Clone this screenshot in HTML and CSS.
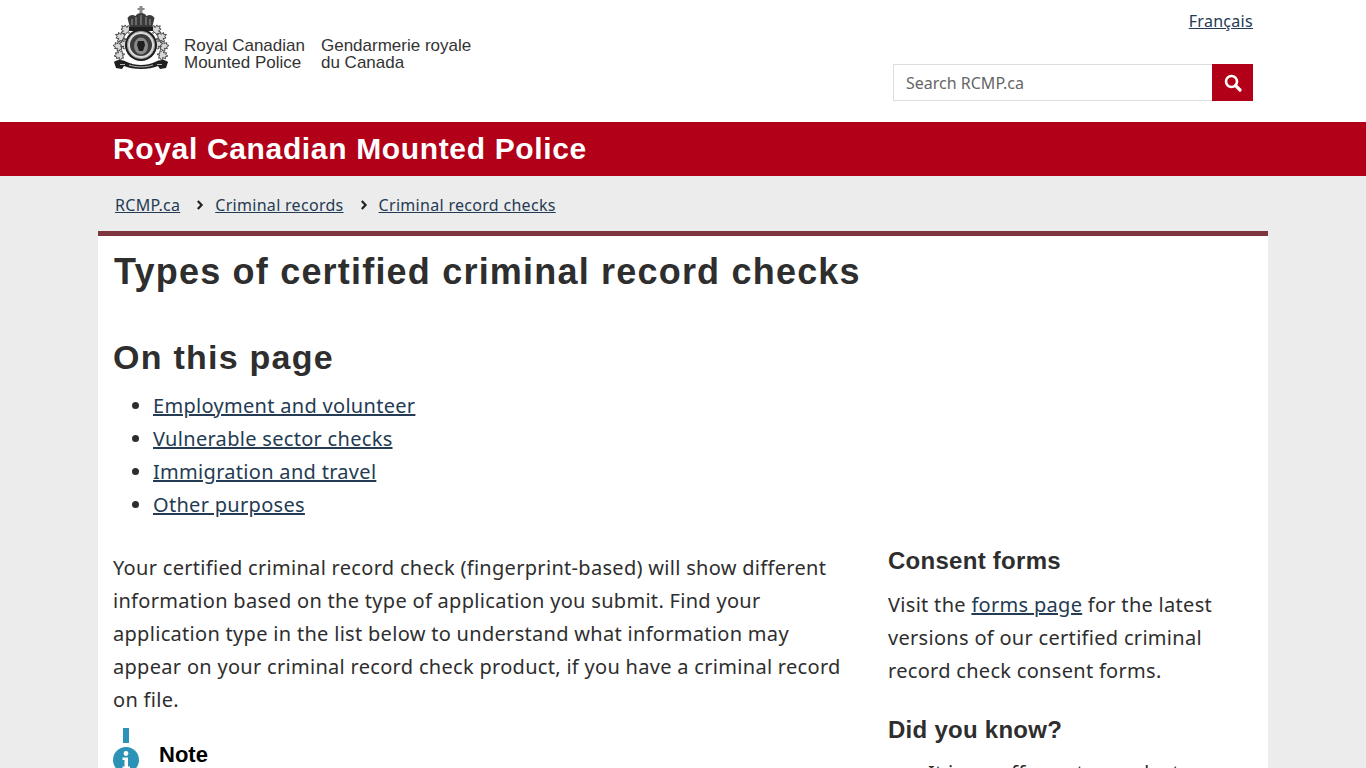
FILE: index.html
```html
<!DOCTYPE html>
<html lang="en">
<head>
<meta charset="utf-8">
<title>Types of certified criminal record checks</title>
<link rel="stylesheet" href="styles.css">
</head>
<body>
<header class="site-header">
  <div class="header-inner">
    <a class="brand" href="#">
      <svg class="crest" viewBox="0 0 56 66" width="56" height="66" aria-hidden="true">
        <defs>
          <path id="leaf" d="M0-6 1.300-3.500 3-4.200 2.400-1 4.500-1.800 5-.2 3.300 1.500 3.800 2.800 0.500 2.500 0.500 4.500-0.500 4.500-0.500 2.500-3.800 2.800-3.300 1.500-5-.2-4.500-1.800-2.400-1-3-4.200-1.300-3.500z"/>
        </defs>
        <g class="leaves">
          <use href="#leaf" transform="translate(7 50) rotate(-100)"/>
          <use href="#leaf" transform="translate(6 41) rotate(-85)"/>
          <use href="#leaf" transform="translate(8 32) rotate(-65)"/>
          <use href="#leaf" transform="translate(13 25) rotate(-45)"/>
          <use href="#leaf" transform="translate(12 39) rotate(-85)"/>
          <use href="#leaf" transform="translate(49 50) rotate(100)"/>
          <use href="#leaf" transform="translate(50 41) rotate(85)"/>
          <use href="#leaf" transform="translate(48 32) rotate(65)"/>
          <use href="#leaf" transform="translate(43 25) rotate(45)"/>
          <use href="#leaf" transform="translate(44 39) rotate(85)"/>
        </g>
        <path class="c-grey" d="M26.500 1h3v2h2v2h-2v3h-3V5h-2V3h2z"/>
        <path class="c-crown" d="M17 23 14.500 13c2-3 5-4 8-2 1-2 3-3 5.500-3s4.500 1 5.500 3c3-2 6-1 8 2L39 23z"/>
        <path class="c-lace" d="M19 14v6M23 12v8M28 10v10M33 12v8M37 14v6"/>
        <rect class="c-dark" x="16" y="22" width="24" height="4"/>
        <circle class="c-dark" cx="28" cy="40" r="16"/>
        <circle class="c-lace" cx="28" cy="40" r="13.600"/>
        <circle class="c-mid" cx="28" cy="40" r="11"/>
        <ellipse class="c-grey" cx="28" cy="41" rx="7" ry="8.500"/>
        <path class="c-dark" d="M25 36h6l1 4-2 6h-4l-2-6z"/>
        <path class="c-dark" d="M1 57c4-3 9-2 13 0 8 4 20 4 28 0 4-2 9-3 13 0l-2 6-6 1-2-3c-9 4-25 4-34 0l-2 3-6-1z"/>
        <path class="c-stripe" d="M7 59.500h5M16 60c7 2.500 17 2.500 24 0M44 59.500h5"/>
      </svg>
      <span class="wordmark"><span>Royal Canadian<br>Mounted Police</span><span>Gendarmerie royale<br>du Canada</span></span>
    </a>
    <div class="tools">
      <a class="lang" href="#">Français</a>
      <form class="search">
        <input class="search-input" type="text" placeholder="Search RCMP.ca" aria-label="Search RCMP.ca">
        <button class="search-btn" type="button" aria-label="Search">
          <svg viewBox="0 0 18 18" width="18" height="18" aria-hidden="true"><circle cx="7.500" cy="7.500" r="5.500" fill="none" stroke="#fff" stroke-width="2.600"/><path d="M11.600 11.600 16 16" stroke="#fff" stroke-width="3.200" stroke-linecap="round"/></svg>
        </button>
      </form>
    </div>
  </div>
</header>
<div class="banner"><div class="banner-inner">Royal Canadian Mounted Police</div></div>
<nav class="crumbs">
  <a href="#">RCMP.ca</a>
  <svg class="chev" viewBox="0 0 8 10" width="8" height="10" aria-hidden="true"><path d="M1.800 1 5.600 5 1.800 9" fill="none" stroke="#222" stroke-width="2.200"/></svg>
  <a href="#">Criminal records</a>
  <svg class="chev" viewBox="0 0 8 10" width="8" height="10" aria-hidden="true"><path d="M1.800 1 5.600 5 1.800 9" fill="none" stroke="#222" stroke-width="2.200"/></svg>
  <a href="#">Criminal record checks</a>
</nav>
<main class="page">
  <h1>Types of certified criminal record checks</h1>
  <h2>On this page</h2>
  <ul class="toc">
    <li><a href="#">Employment and volunteer</a></li>
    <li><a href="#">Vulnerable sector checks</a></li>
    <li><a href="#">Immigration and travel</a></li>
    <li><a href="#">Other purposes</a></li>
  </ul>
  <div class="columns">
    <div class="main-col">
      <p>Your certified criminal record check (fingerprint-based) will show different information based on the type of application you submit. Find your application type in the list below to understand what information may appear on your criminal record check product, if you have a criminal record on file.</p>
      <section class="note">
        <div class="note-icon">
          <span class="note-bar"></span>
          <svg viewBox="0 0 26 26" width="26" height="26" aria-hidden="true"><circle cx="13" cy="13" r="13" fill="#2b93b5"/><circle cx="13" cy="6.500" r="2.400" fill="#fff"/><path d="M9.500 10.500h5.500v9h2v2.500H9.500v-2.500h2v-6.500h-2z" fill="#fff"/></svg>
        </div>
        <h3>Note</h3>
      </section>
    </div>
    <aside class="side-col">
      <h3>Consent forms</h3>
      <p>Visit the <a href="#">forms page</a> for the latest versions of our certified criminal record check consent forms.</p>
      <h3 class="second">Did you know?</h3>
      <ul class="side-list"><li>It is an offence to conduct</li></ul>
    </aside>
  </div>
</main>
</body>
</html>
```
FILE: styles.css
```css
* { box-sizing: border-box; }
html, body { margin: 0; padding: 0; height: 768px; overflow: hidden; }
body { background: #ececec; color: #2e2e2e; font-family: "Noto Sans", sans-serif; font-size: 20px; line-height: 33px; letter-spacing: 0.3px; }
a { color: #243b53; text-decoration: underline; }
.site-header { background: #fff; height: 122px; }
.header-inner { width: 1140px; margin: 0 auto; padding-top: 5px; display: flex; justify-content: space-between; }
.brand { display: flex; align-items: flex-start; gap: 15px; text-decoration: none; color: #2e2e2e; }
.crest { flex: none; }
.leaves { fill: #d8d8d8; stroke: #333; stroke-width: 0.8px; }
.c-dark { fill: #1f1f1f; }
.c-grey { fill: #8a8a8a; }
.c-crown { fill: #3a3a3a; }
.c-lace { fill: #d9d9d9; stroke: #9a9a9a; stroke-width: 1px; }
.c-mid { fill: #3c3c3c; }
.c-stripe { fill: none; stroke: #b5b5b5; stroke-width: 1px; }
.wordmark { display: flex; gap: 16px; margin-top: 32px; font-family: "Liberation Sans", Arial, sans-serif; font-size: 17px; line-height: 17px; letter-spacing: 0; color: #333; }
.tools { display: flex; flex-direction: column; align-items: flex-end; padding-top: 1px; }
.lang { font-size: 16px; line-height: 30px; color: #243b53; }
.search { display: flex; width: 360px; height: 37px; margin-top: 28px; }
.search-input { flex: 1; min-width: 0; border: 1px solid #ddd; border-right: 0; padding: 0 12px; font: 16px "Noto Sans", sans-serif; color: #555; background: #fff; outline: 0; }
.search-input::placeholder { color: #666; opacity: 1; }
.search-btn { width: 41px; border: 0; padding: 0; background: #b10018; display: flex; align-items: center; justify-content: center; }
.banner { background: #b10018; height: 54px; }
.banner-inner { width: 1140px; margin: 0 auto; color: #fff; font-family: "Liberation Sans", Arial, sans-serif; font-weight: 700; font-size: 30px; line-height: 53px; letter-spacing: 0.65px; }
.crumbs { width: 1136px; margin: 0 auto; height: 55px; display: flex; align-items: center; gap: 12px; font-size: 16px; line-height: 22px; padding-top: 3px; }
.chev { flex: none; margin-left: 4px; margin-right: -1px; }
.page { width: 1170px; margin: 0 auto; background: #fff; border-top: 5px solid #7d353e; padding: 0 15px; height: 600px; }
h1, h2, h3 { font-family: "Liberation Sans", Arial, sans-serif; font-weight: 700; color: #2e2e2e; margin: 0; letter-spacing: 0; }
h1 { font-size: 36px; line-height: 40px; padding-top: 16px; letter-spacing: 1.2px; margin-left: 1px; }
h2 { font-size: 34px; line-height: 40px; margin-top: 45px; letter-spacing: 1.25px; }
.toc { margin: 12px 0 0; padding: 0 0 0 40px; }
.columns { display: flex; gap: 45px; margin-top: 30px; }
.main-col { width: 730px; flex: none; }
.main-col p { margin: 0; }
.note { display: flex; gap: 20px; margin-top: 12px; }
.note-icon { display: flex; flex-direction: column; width: 26px; align-items: center; gap: 4px; }
.note-bar { width: 6px; height: 15px; background: #2b93b5; }
.note h3 { color: #000; font-size: 22px; line-height: 26px; margin-top: 14px; }
.side-col { flex: 1; }
.side-col h3 { font-size: 24px; line-height: 28px; margin-top: -21px; letter-spacing: 0.27px; }
.side-col > h3:first-child { margin-top: -21px; padding-top: 17px; }
.side-col p { margin: 13px 0 0; }
.side-col h3.second { margin-top: 29px; }
.side-list { margin: 12px 0 0; padding-left: 40px; list-style: none; }
```
